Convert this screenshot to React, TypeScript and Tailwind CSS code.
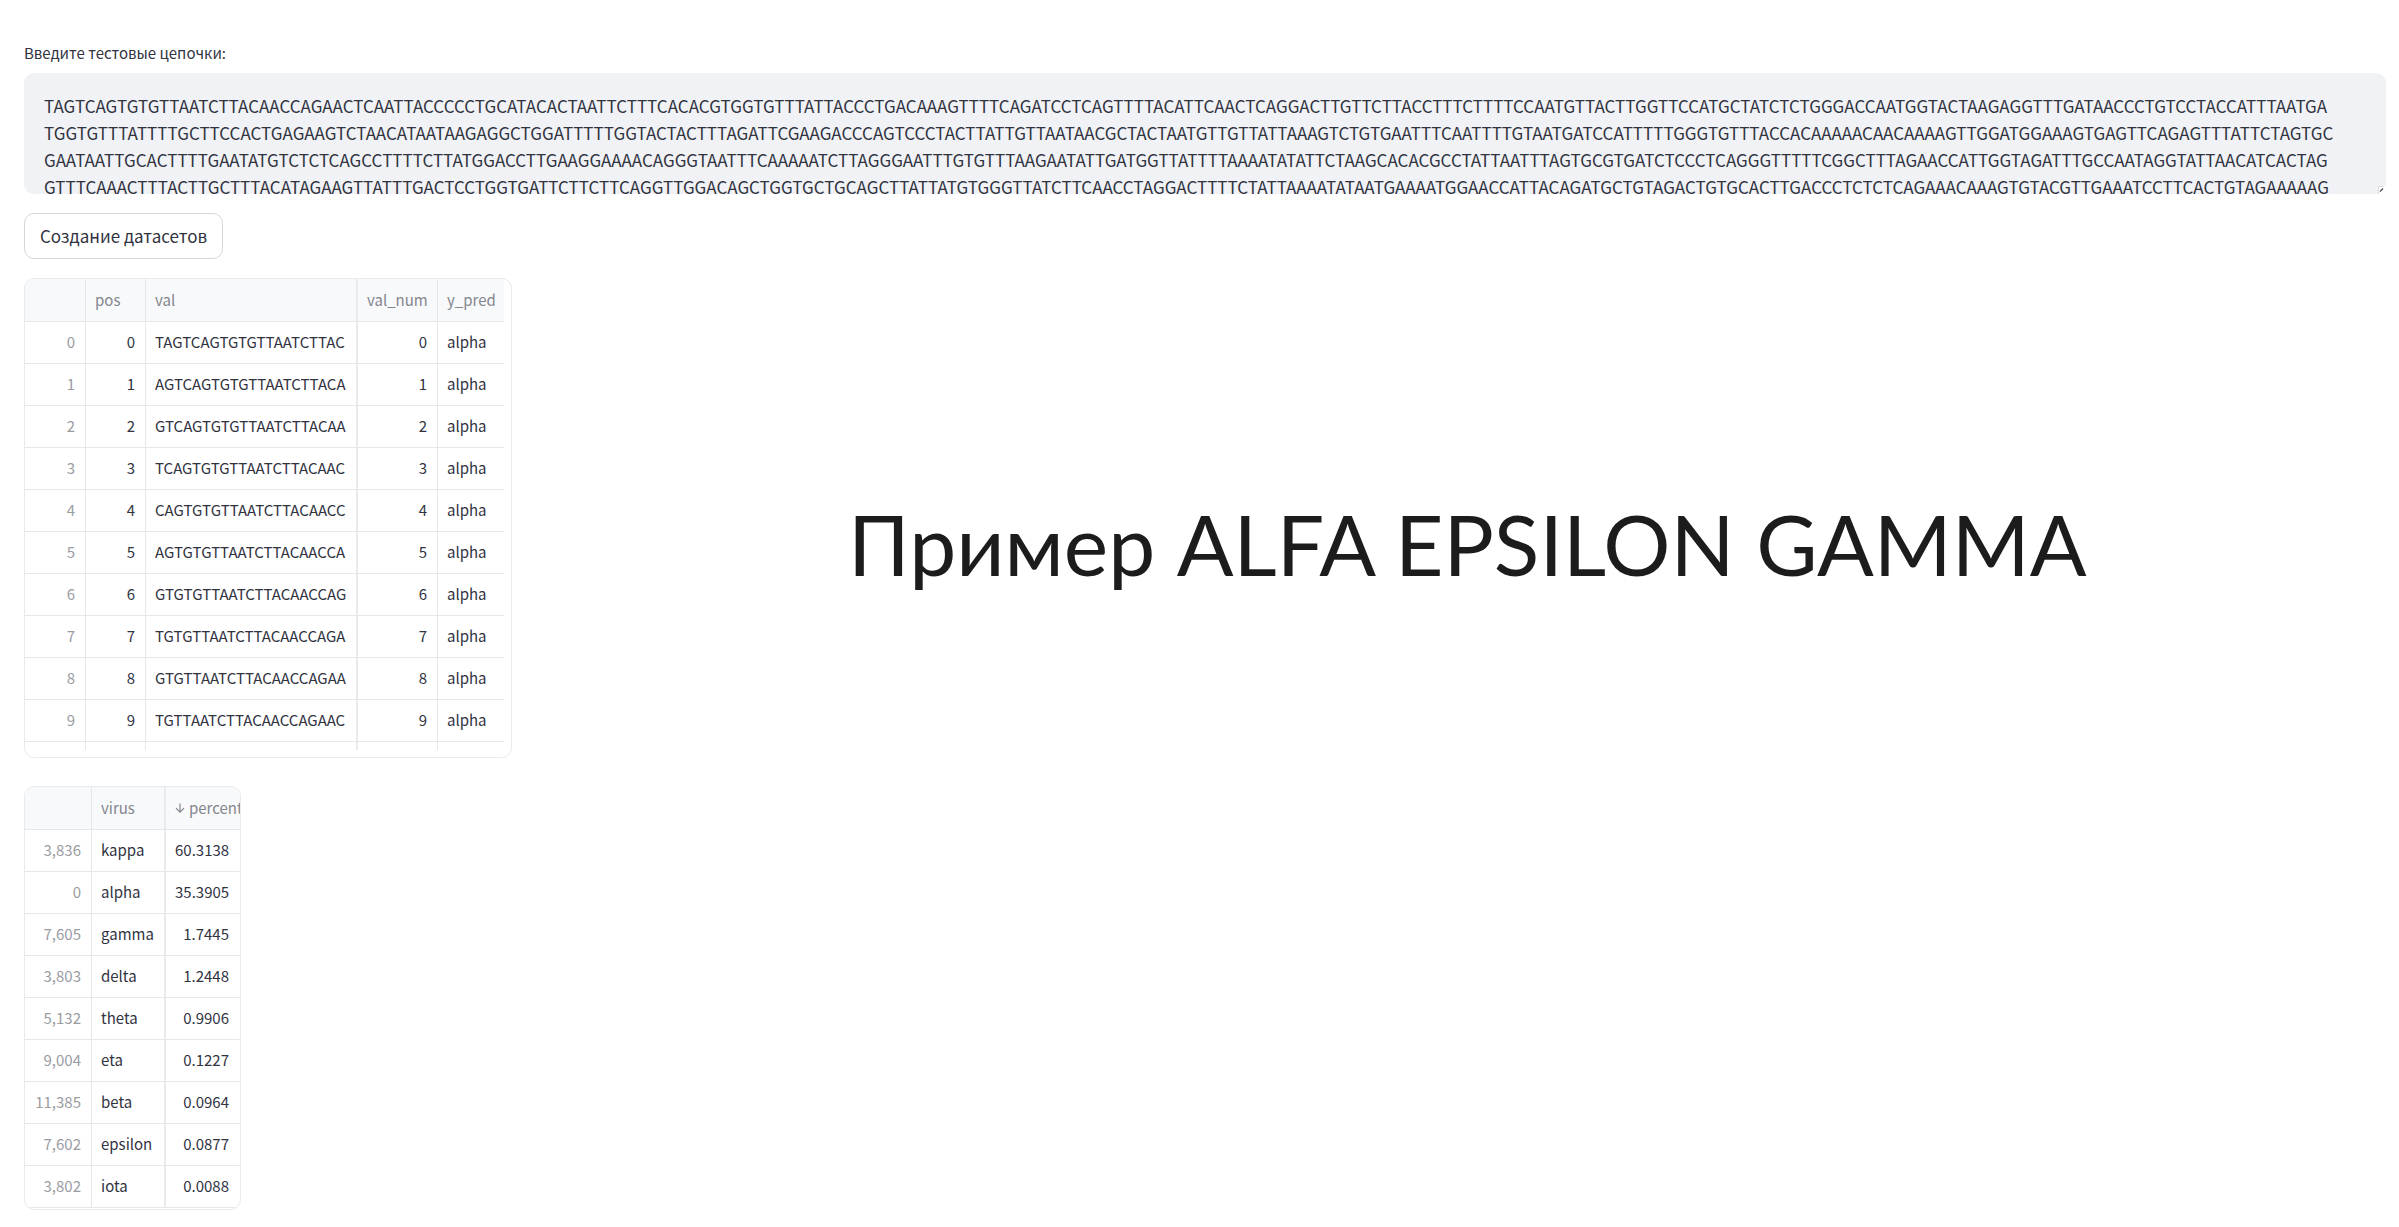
import type { ReactNode } from 'react';

const sequence = [
  'TAGTCAGTGTGTTAATCTTACAACCAGAACTCAATTACCCCCTGCATACACTAATTCTTTCACACGTGGTGTTTATTACCCTGACAAAGTTTTCAGATCCTCAGTTTTACATTCAACTCAGGACTTGTTCTTACCTTTCTTTTCCAATGTTACTTGGTTCCATGCTATCTCTGGGACCAATGGTACTAAGAGGTTTGATAACCCTGTCCTACCATTTAATGA',
  'TGGTGTTTATTTTGCTTCCACTGAGAAGTCTAACATAATAAGAGGCTGGATTTTTGGTACTACTTTAGATTCGAAGACCCAGTCCCTACTTATTGTTAATAACGCTACTAATGTTGTTATTAAAGTCTGTGAATTTCAATTTTGTAATGATCCATTTTTGGGTGTTTACCACAAAAACAACAAAAGTTGGATGGAAAGTGAGTTCAGAGTTTATTCTAGTGC',
  'GAATAATTGCACTTTTGAATATGTCTCTCAGCCTTTTCTTATGGACCTTGAAGGAAAACAGGGTAATTTCAAAAATCTTAGGGAATTTGTGTTTAAGAATATTGATGGTTATTTTAAAATATATTCTAAGCACACGCCTATTAATTTAGTGCGTGATCTCCCTCAGGGTTTTTCGGCTTTAGAACCATTGGTAGATTTGCCAATAGGTATTAACATCACTAG',
  'GTTTCAAACTTTACTTGCTTTACATAGAAGTTATTTGACTCCTGGTGATTCTTCTTCAGGTTGGACAGCTGGTGCTGCAGCTTATTATGTGGGTTATCTTCAACCTAGGACTTTTCTATTAAAATATAATGAAAATGGAACCATTACAGATGCTGTAGACTGTGCACTTGACCCTCTCTCAGAAACAAAGTGTACGTTGAAATCCTTCACTGTAGAAAAAG',
].join('\n');

const windows = Array.from({ length: 10 }, (_, i) => sequence.slice(i, i + 21));

const shares: [string, string, string][] = [
  ['3,836', 'kappa', '60.3138'],
  ['0', 'alpha', '35.3905'],
  ['7,605', 'gamma', '1.7445'],
  ['3,803', 'delta', '1.2448'],
  ['5,132', 'theta', '0.9906'],
  ['9,004', 'eta', '0.1227'],
  ['11,385', 'beta', '0.0964'],
  ['7,602', 'epsilon', '0.0877'],
  ['3,802', 'iota', '0.0088'],
];

const head = 'h-[43px] border-b border-[#e6e7ea] px-[9px] text-left font-normal whitespace-nowrap text-[#84868e]';
const cell = 'h-[42px] border-b border-[#e6e7ea] pr-[10px] pl-[9px] pb-[2px] whitespace-nowrap';
const line = 'border-r border-r-[#e6e7ea]';
const thick = 'border-r-2 border-r-[#e9eaec]';

function Frame({ className, children }: { className: string; children: ReactNode }) {
  return (
    <div className={`overflow-hidden rounded-[10px] border border-[#e9eaec] ${className}`}>{children}</div>
  );
}

export default function App() {
  return (
    <main className="min-h-screen bg-white pt-10 pr-[13px] pb-4 pl-6 font-['Noto_Sans_CJK_SC','Noto_Sans',sans-serif] text-[#31333f]">
      <label htmlFor="chains" className="block h-[33px] text-[15px] leading-[26px]">
        Введите тестовые цепочки:
      </label>
      <div className="relative">
        <textarea
          id="chains"
          wrap="off"
          defaultValue={sequence}
          className="block h-[121px] w-full resize-none overflow-hidden rounded-[10px] bg-[#f0f2f6] px-5 pt-[19px] text-[17px] leading-[27px] outline-none"
        />
        <svg
          className="pointer-events-none absolute right-0 bottom-0 size-2"
          viewBox="0 0 8 8"
          aria-hidden="true"
        >
          <path d="M0 0H8V2A6 6 0 0 1 2 8H0Z" fill="#fff" />
          <path d="M0.5 8V0.5H6" fill="none" stroke="#dcdcdc" />
          <path d="M2 5.5L5 2.5" fill="none" stroke="#555" strokeWidth="1.5" />
        </svg>
      </div>
      <button
        type="button"
        className="mt-[19px] block h-[46px] rounded-[10px] border border-[#d6d6d9] px-[15px] text-[17px]"
      >
        Создание датасетов
      </button>
      <div className="mt-[19px] flex items-start">
        <div className="shrink-0 text-[15px] leading-6">
          <Frame className="h-[480px] w-[488px]">
            <div className="h-[471px] overflow-hidden">
              <table className="w-[479px] table-fixed border-separate border-spacing-0">
                <thead>
                  <tr className="bg-[#f8f9fb]">
                    <th className={`${head} ${line} w-[61px]`} aria-label="index" />
                    <th className={`${head} ${line} w-[60px]`}>pos</th>
                    <th className={`${head} ${thick} w-[212px]`}>val</th>
                    <th className={`${head} ${line} w-[80px]`}>val_num</th>
                    <th className={head}>y_pred</th>
                  </tr>
                </thead>
                <tbody>
                  {windows.map((val, i) => (
                    <tr key={i}>
                      <td className={`${cell} ${line} text-right text-[#9a9ca2]`}>{i}</td>
                      <td className={`${cell} ${line} text-right`}>{i}</td>
                      <td className={`${cell} ${thick}`}>{val}</td>
                      <td className={`${cell} ${line} text-right`}>{i}</td>
                      <td className={cell}>alpha</td>
                    </tr>
                  ))}
                  <tr aria-hidden="true">
                    <td className={`${cell} ${line}`} />
                    <td className={`${cell} ${line}`} />
                    <td className={`${cell} ${thick}`} />
                    <td className={`${cell} ${line}`} />
                    <td className={cell} />
                  </tr>
                </tbody>
              </table>
            </div>
          </Frame>
          <Frame className="mt-7 h-[424px] w-[217px]">
            <table className="w-[215px] table-fixed border-separate border-spacing-0">
              <thead>
                <tr className="bg-[#f8f9fb]">
                  <th className={`${head} ${line} w-[67px]`} aria-label="index" />
                  <th className={`${head} ${thick} w-[74px]`}>virus</th>
                  <th className={`${head} overflow-hidden`}>
                    <span className="flex items-center gap-1">
                      <svg
                        className="size-[10px] shrink-0"
                        viewBox="0 0 10 10"
                        fill="none"
                        stroke="currentColor"
                        strokeWidth="1.2"
                        aria-hidden="true"
                      >
                        <path d="M5 0.5V9M1 5.2L5 9.2L9 5.2" />
                      </svg>
                      percent
                    </span>
                  </th>
                </tr>
              </thead>
              <tbody>
                {shares.map(([index, virus, percent]) => (
                  <tr key={index}>
                    <td className={`${cell} ${line} text-right text-[#9a9ca2]`}>{index}</td>
                    <td className={`${cell} ${thick}`}>{virus}</td>
                    <td className={`${cell} border-r border-r-transparent text-right`}>{percent}</td>
                  </tr>
                ))}
              </tbody>
            </table>
          </Frame>
        </div>
        <h1 className="mt-[215px] ml-[336px] font-['Lato','Noto_Sans',sans-serif] text-[84px] leading-[102px] whitespace-nowrap text-[#1c1c1c]">
          Пример ALFA EPSILON GAMMA
        </h1>
      </div>
    </main>
  );
}
